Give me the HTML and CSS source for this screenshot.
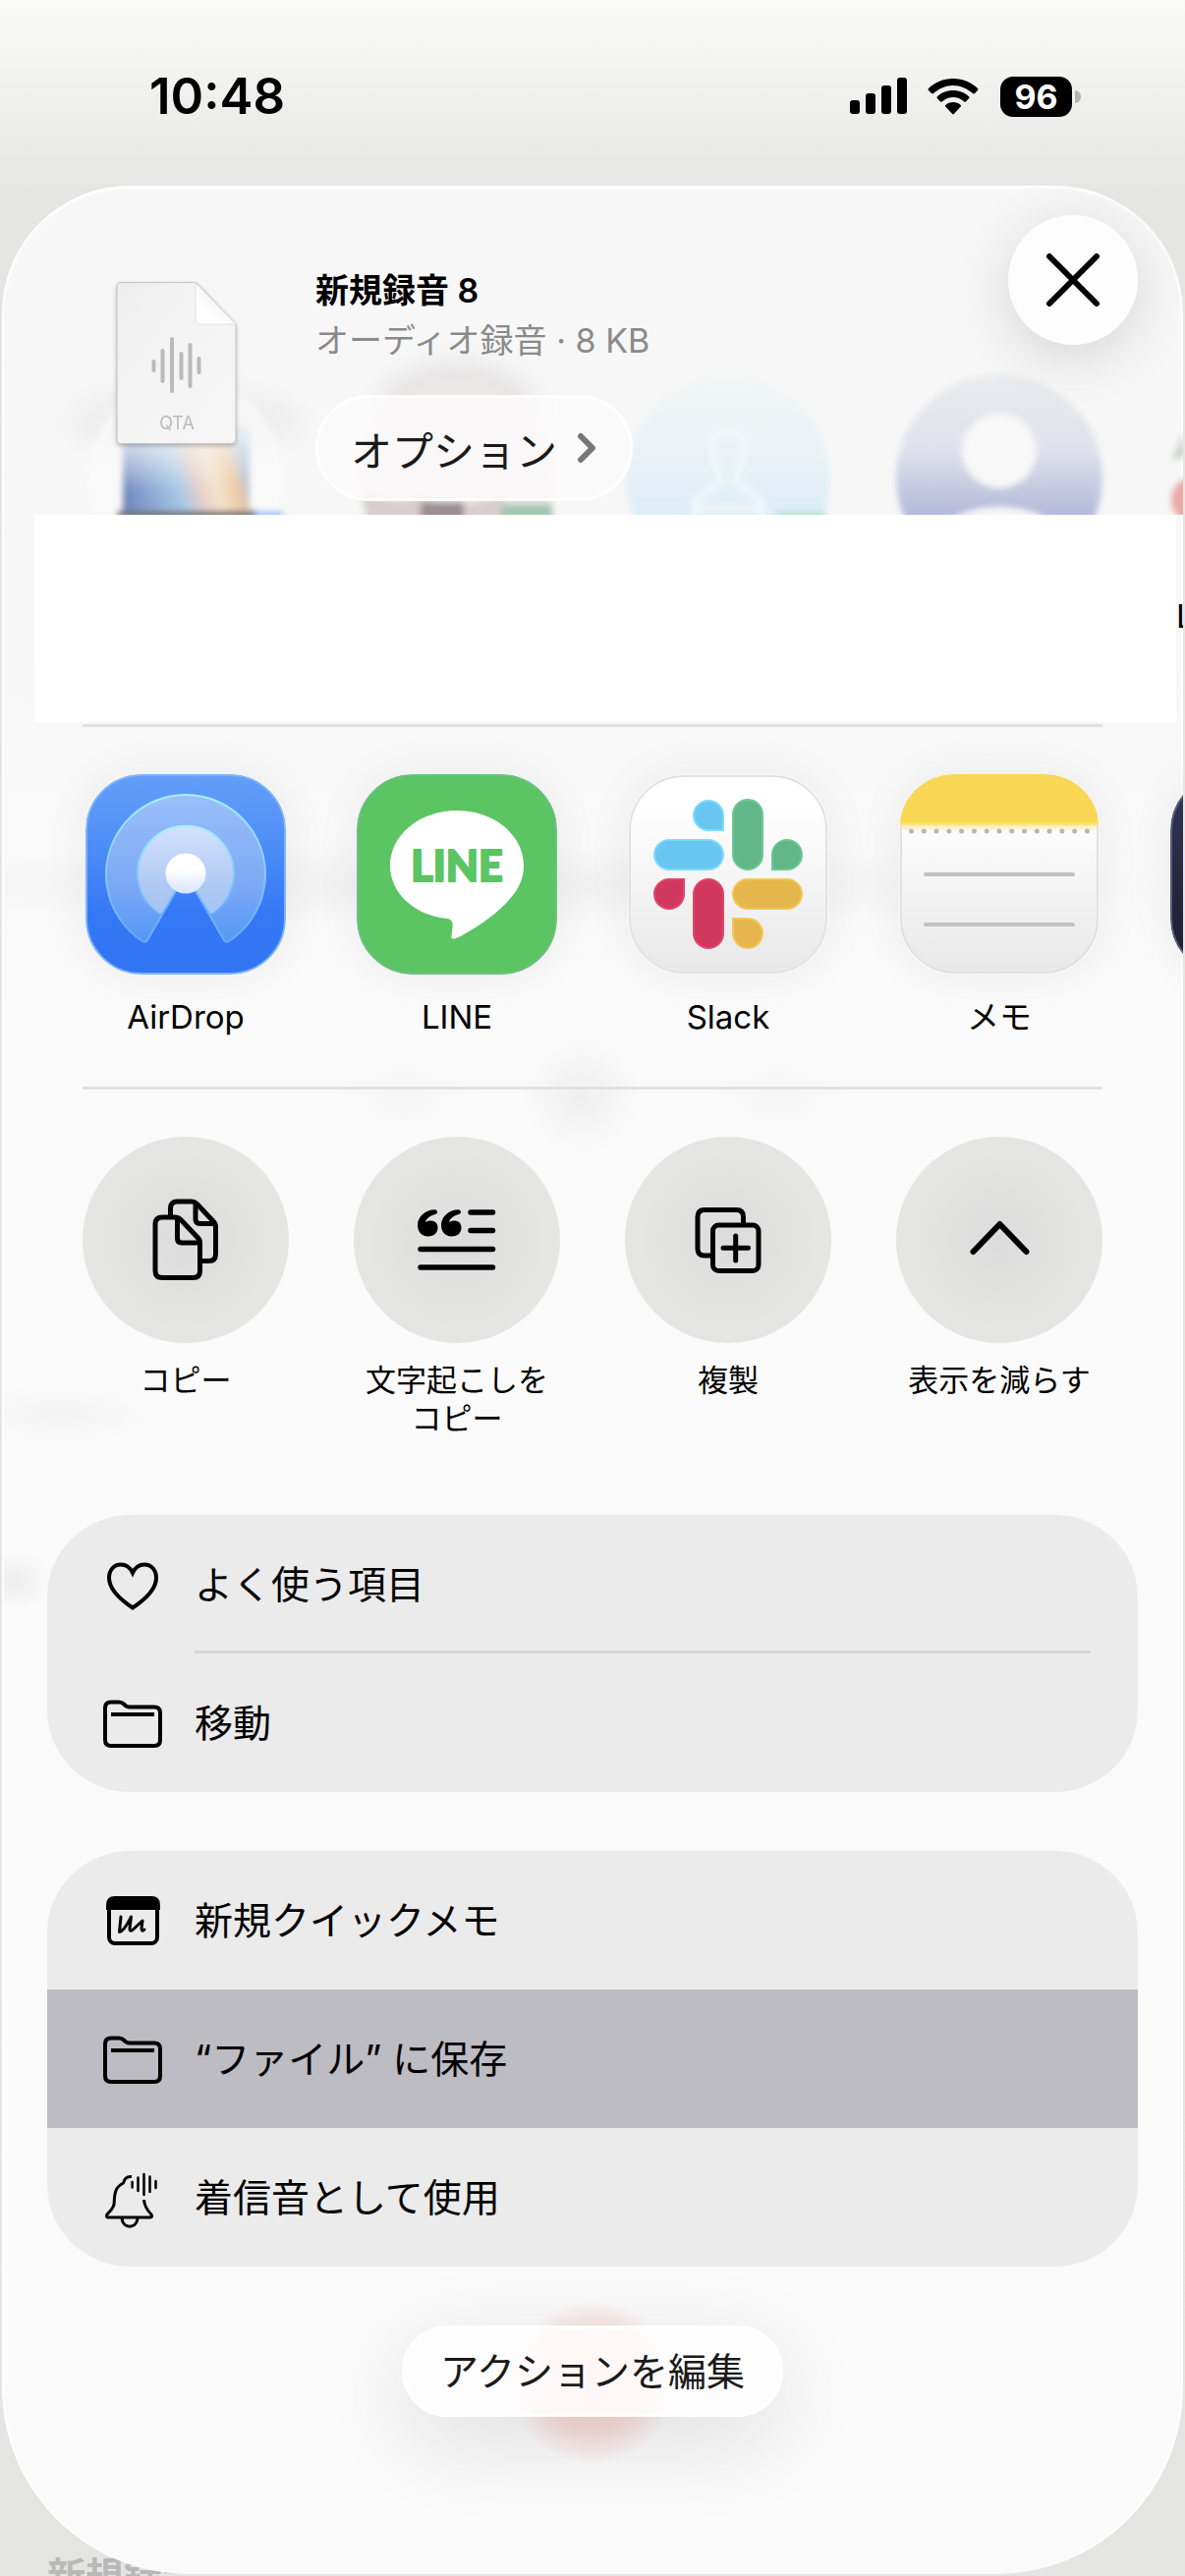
FILE: index.html
```html
<!DOCTYPE html>
<html lang="ja">
<head>
<meta charset="utf-8">
<meta name="viewport" content="width=device-width">
<title>共有</title>
<link rel="stylesheet" href="styles.css">
</head>
<body>
<div class="phone">
  <div class="status">
    <span class="clock">10:48</span>
    <svg class="signal" viewBox="0 0 58 38" aria-hidden="true">
      <rect x="0" y="23" width="10" height="14" rx="3"/><rect x="16" y="16" width="10" height="21" rx="3"/><rect x="32" y="8" width="10" height="29" rx="3"/><rect x="48" y="0" width="10" height="37" rx="3"/>
    </svg>
    <svg class="wifi" viewBox="0 0 52 38" aria-hidden="true">
      <path d="M26 1C36 1 45 5 51 11c.6.6.6 1.300 0 2l-3 3c-.6.6-1.300.6-2 0C40 11 33.500 8 26 8S12 11 6 16c-.7.6-1.400.6-2 0l-3-3c-.6-.7-.6-1.400 0-2C7 5 16 1 26 1z"/>
      <path d="M26 13c6.500 0 12 2.500 16 6.200.7.700.7 1.400 0 2l-3 3c-.7.7-1.300.7-2 0C34 21.500 30 20 26 20s-8 1.500-11 4.200c-.7.7-1.300.7-2 0l-3-3c-.7-.6-.7-1.300 0-2C14 15.500 19.500 13 26 13z"/>
      <path d="M26 25c3 0 5.500 1 7.500 2.700.7.700.7 1.300 0 2l-6.500 7c-.7.700-1.300.700-2 0l-6.500-7c-.7-.7-.7-1.300 0-2C20.500 26 23 25 26 25z"/>
    </svg>
    <span class="battery">96</span>
  </div>

  <main class="sheet">
    <header class="file-header">
      <svg class="people" width="1202" height="335" viewBox="0 0 1202 335" aria-hidden="true">
        <defs>
          <filter id="soft" x="-20%" y="-20%" width="140%" height="140%"><feGaussianBlur stdDeviation="3"/></filter>
          <filter id="softer" x="-40%" y="-40%" width="180%" height="180%"><feGaussianBlur stdDeviation="12"/></filter>
          <linearGradient id="sky" x1="0" y1="190" x2="0" y2="335" gradientUnits="userSpaceOnUse"><stop offset="0" stop-color="#f3f6f7"/><stop offset=".6" stop-color="#eaf2f6"/><stop offset="1" stop-color="#dcedf7"/></linearGradient>
          <linearGradient id="dusk" x1="0" y1="190" x2="0" y2="335" gradientUnits="userSpaceOnUse"><stop offset="0" stop-color="#ebecee"/><stop offset=".55" stop-color="#dfe1eb"/><stop offset="1" stop-color="#b4b9d9"/></linearGradient>
          <linearGradient id="photo" x1="120" y1="320" x2="250" y2="280" gradientUnits="userSpaceOnUse"><stop offset="0" stop-color="#6f82bd"/><stop offset=".45" stop-color="#a9cae6"/><stop offset=".6" stop-color="#ead0c8"/><stop offset=".72" stop-color="#f3e3cb"/><stop offset=".86" stop-color="#efc9a4"/><stop offset="1" stop-color="#9dbfe2"/></linearGradient>
          <linearGradient id="veil" x1="0" y1="240" x2="0" y2="310" gradientUnits="userSpaceOnUse"><stop offset="0" stop-color="#f7f7f7"/><stop offset="1" stop-color="#f7f7f7" stop-opacity="0"/></linearGradient>
        </defs>
        <ellipse cx="187" cy="240" rx="120" ry="34" fill="#e6e6e6" opacity=".55" filter="url(#softer)"/>
        <circle cx="187" cy="297" r="100" fill="#fafafa" opacity=".7" filter="url(#soft)"/>
        <g filter="url(#soft)">
          <rect x="123" y="232" width="129" height="105" fill="url(#photo)"/>
          <rect x="118" y="331" width="140" height="10" fill="#77777a"/>
          <rect x="258" y="332" width="28" height="8" fill="#9ebdfb"/>
          <rect x="118" y="222" width="140" height="90" fill="url(#veil)"/>
        </g>
        <ellipse cx="463" cy="230" rx="80" ry="50" fill="#d9d6d5" opacity=".6" filter="url(#softer)"/>
        <g filter="url(#soft)">
          <circle cx="463" cy="297" r="100" fill="#ece7e7"/>
          <path d="M366 312l36 10 28-6 22 14 60-14-4 30H372z" fill="#d6cfce"/>
          <rect x="426" y="322" width="44" height="20" fill="#9c8e92"/>
          <rect x="508" y="324" width="52" height="20" fill="#a5c5b3"/>
          <circle cx="739" cy="297" r="104" fill="url(#sky)"/>
          <path d="M704 341v-12q0-8 9-14 18-10 18-18 0-6-4-12-13-34 12-35 25 1 12 35-4 6-4 12 0 8 18 18 9 6 9 14v12M704 329h70" fill="none" stroke="#f3f7f9" stroke-width="7"/>
          <rect x="788" y="333" width="50" height="8" fill="#a4dcc2"/>
          <circle cx="1015" cy="297" r="105" fill="url(#dusk)"/>
          <circle cx="1015" cy="270" r="38" fill="#f8f8f8"/>
          <ellipse cx="1015" cy="358" rx="60" ry="31" fill="#f7f7f9"/>
          <path d="M1190 280l14-30v26z" fill="#c9d4ca"/><circle cx="1214" cy="320" r="24" fill="#eba9a6"/>
        </g>
      </svg>
      <svg class="doc" viewBox="0 0 123 165" role="img" aria-label="QTA">
        <defs>
          <linearGradient id="paper" x1="0" y1="0" x2="1" y2="1"><stop offset="0" stop-color="#ededed"/><stop offset=".4" stop-color="#f4f4f4"/><stop offset="1" stop-color="#f6f6f6"/></linearGradient>
          <linearGradient id="fold" x1="0" y1="1" x2="1" y2="0"><stop offset=".3" stop-color="#fff"/><stop offset="1" stop-color="#e9e9e9"/></linearGradient>
        </defs>
        <path d="M5 .5h74q3 0 5 2l36 38q2 2 2 5v114q0 5-5 5H5q-4 0-4-5V5q0-4.500 4-4.500z" fill="url(#paper)" stroke="#c4c4c4"/>
        <path d="M81 1l41 42H86q-5 0-5-5z" fill="url(#fold)" stroke="#e0e0e0"/>
        <path d="M38.500 81v9M47.500 70v31M57 58v53M66.500 73v25M75.500 64v42M84.500 78v14" stroke="#bababa" stroke-width="4" stroke-linecap="round"/>
        <text x="62" y="150" text-anchor="middle" class="doc-type">QTA</text>
      </svg>
      <div class="file-text">
        <h1 class="file-name">新規録音 8</h1>
        <p class="file-meta">オーディオ録音 · 8 KB</p>
        <button class="options" type="button">オプション
          <svg viewBox="0 0 20 32" aria-hidden="true"><path d="M4 4l12 12L4 28" fill="none" stroke="#777" stroke-width="6" stroke-linecap="round" stroke-linejoin="round"/></svg>
        </button>
      </div>
      <button class="close" type="button" aria-label="閉じる">
        <svg viewBox="0 0 56 56" aria-hidden="true"><path d="M4 4l48 48M52 4L4 52" stroke="#000" stroke-width="6" stroke-linecap="round"/></svg>
      </button>
    </header>

    <section class="contacts"><span class="contact-name">L</span></section>
    <hr class="rule">

    <nav class="strip" aria-label="アプリ">
      <a class="tile" href="#airdrop">
        <svg class="app" viewBox="0 0 204 204" aria-hidden="true">
          <defs>
            <linearGradient id="blue" x1="0" y1="0" x2="0" y2="1"><stop offset="0" stop-color="#629ef9"/><stop offset=".25" stop-color="#5593f7"/><stop offset=".7" stop-color="#3478f5"/><stop offset="1" stop-color="#3275f3"/></linearGradient>
            <linearGradient id="rim" x1="0" y1="0" x2="0" y2="1"><stop offset="0" stop-color="#a7f0ff"/><stop offset="1" stop-color="#66a9fa"/></linearGradient>
            <linearGradient id="ring" x1="0" y1="0" x2="0" y2="1"><stop offset="0" stop-color="#9abffa"/><stop offset=".6" stop-color="#7daaf5"/><stop offset="1" stop-color="#5597f5"/></linearGradient>
            <linearGradient id="core" x1="0" y1="0" x2="0" y2="1"><stop offset="0" stop-color="#d4e2fc"/><stop offset=".7" stop-color="#adc8f3"/><stop offset="1" stop-color="#a2c5f7"/></linearGradient>
            <linearGradient id="dot" x1="0" y1="0" x2="0" y2="1"><stop offset=".4" stop-color="#fff"/><stop offset="1" stop-color="#d6e4fb"/></linearGradient>
          </defs>
          <rect x="1" y="1" width="202" height="202" rx="56" fill="url(#blue)" stroke="#7db4f9" stroke-width="2"/>
          <path d="M102 101L63 169q-2 3-5 1A81 81 0 1 1 146 170q-3 2-5-1z" fill="url(#ring)" stroke="url(#rim)" stroke-width="2"/>
          <path d="M102 101L79 141q-2 3-5 1A49 49 0 1 1 130 142q-3 2-5-1z" fill="url(#core)" stroke="url(#rim)" stroke-width="2"/>
          <circle cx="102" cy="101" r="20.500" fill="url(#dot)"/>
        </svg>
        <span class="app-label">AirDrop</span>
      </a>
      <a class="tile" href="#line">
        <svg class="app" viewBox="0 0 204 204" aria-hidden="true">
          <rect x="1" y="1" width="202" height="202" rx="56" fill="#5bc463" stroke="#6fbf83" stroke-width="2"/>
          <path d="M102 37c38 0 68 25 68 56 0 13-5 24-15 35-13 15-38 32-54 39-4 1.500-5 0-4.500-3l1-8c.5-5 0-8-6-9C57 143 34 120 34 93c0-31 30-56 68-56z" fill="#fff"/>
          <text x="102" y="109" text-anchor="middle" class="line-mark">LINE</text>
        </svg>
        <span class="app-label">LINE</span>
      </a>
      <a class="tile" href="#slack">
        <svg class="app" viewBox="0 0 204 204" aria-hidden="true">
          <defs><linearGradient id="white" x1="0" y1="0" x2="0" y2="1"><stop offset=".15" stop-color="#fff"/><stop offset="1" stop-color="#e8e8e8"/></linearGradient></defs>
          <rect x="2" y="2" width="200" height="200" rx="55" fill="url(#white)" stroke="#e2e2e2" stroke-width="2"/>
          <g stroke-width="2">
            <g fill="#69c6f0" stroke="#7bdcff"><path d="M97 57H82a15 15 0 1 1 15-15z"/><rect x="27" y="67" width="70" height="30" rx="15"/></g>
            <g fill="#61b787" stroke="#69c993"><rect x="107" y="26" width="30" height="71" rx="15"/><path d="M147 97V82a15 15 0 1 1 15 15z"/></g>
            <g fill="#d1385d" stroke="#e1456c"><path d="M57 107v15a15 15 0 1 1-15-15z"/><rect x="67" y="107" width="30" height="70" rx="15"/></g>
            <g fill="#e5b64b" stroke="#f0c75a"><rect x="107" y="107" width="70" height="30" rx="15"/><path d="M107 147h15a15 15 0 1 1-15 15z"/></g>
          </g>
        </svg>
        <span class="app-label">Slack</span>
      </a>
      <a class="tile" href="#memo">
        <svg class="app" viewBox="0 0 204 204" aria-hidden="true">
          <defs><linearGradient id="glow" x1="0" y1="0" x2="0" y2="1"><stop offset="0" stop-color="#f9e7a0"/><stop offset="1" stop-color="#fbfaf3"/></linearGradient></defs>
          <rect x="2" y="2" width="200" height="200" rx="55" fill="url(#white)" stroke="#e0e0e0" stroke-width="2"/>
          <rect x="3" y="50" width="198" height="8" fill="url(#glow)"/>
          <path d="M1 51C3 18 22 0 56 0h92c34 0 53 18 55 51z" fill="#f8d755"/>
          <path d="M1 50h202" stroke="#fce05c" stroke-width="3"/>
          <path d="M12.500 58h180" stroke="#bdb8a5" stroke-width="5" stroke-linecap="round" stroke-dasharray="0 12.780"/>
          <path d="M27 102h150M27 153h150" stroke="#c1c1c1" stroke-width="4" stroke-linecap="round"/>
        </svg>
        <span class="app-label">メモ</span>
      </a>
      <a class="tile" href="#more" aria-label="その他">
        <svg class="app" viewBox="0 0 204 204" aria-hidden="true">
          <defs><linearGradient id="night" x1="0" y1="0" x2="0" y2="1"><stop offset="0" stop-color="#34365a"/><stop offset="1" stop-color="#1b1c2a"/></linearGradient></defs>
          <rect x="1" y="1" width="202" height="202" rx="56" fill="url(#night)" stroke="#5b5e80" stroke-width="2"/>
        </svg>
      </a>
    </nav>
    <hr class="rule">

    <div class="strip strip-actions">
      <button class="tile" type="button">
        <svg class="round" viewBox="0 0 210 210" aria-hidden="true">
          <g fill="none" stroke="#000" stroke-width="5" stroke-linejoin="round">
            <path d="M89.500 81v-8q0-7 7-7H111q3 0 5 2l17 18q2.500 2.500 2.500 6v27.500q0 7-7 7H122"/>
            <path d="M115 67v17q0 4.500 4.500 4.500H135"/>
            <path d="M81 82h13.500q3 0 5 2l17 18q3 2.500 3 6v28.500q0 7-7 7H81q-7 0-7-7V89q0-7 7-7z"/>
            <path d="M96.500 83v20.500q0 4.500 4.500 4.500h18"/>
          </g>
        </svg>
        <span class="action-label">コピー</span>
      </button>
      <button class="tile" type="button">
        <svg class="round" viewBox="0 0 210 210" aria-hidden="true">
          <path d="M119 77h22.500M119 95.500h22.500M68 114.500h73.500M68 133h73.500" stroke="#000" stroke-width="5.500" stroke-linecap="round"/>
          <path id="quote" d="M82.500 74.300c3 0 3.500 4 .5 4.700-5 1.200-9 4-10 8 9-4 13 1 12.500 6.500-.5 5-4.500 8-10 8-6.500 0-10.500-5-10.500-11.500 0-8.500 8-15.700 17.500-15.700z"/>
          <use href="#quote" x="24"/>
        </svg>
        <span class="action-label">文字起こしを<br>コピー</span>
      </button>
      <button class="tile" type="button">
        <svg class="round" viewBox="0 0 210 210" aria-hidden="true">
          <g fill="none" stroke="#000" stroke-width="5" stroke-linecap="round">
            <path stroke-linecap="butt" d="M87 121h-6q-7 0-7-7V81.500q0-7 7-7h32.500q7 0 7 7V88"/>
            <rect x="89.500" y="90" width="46.500" height="46.500" rx="6"/>
            <path d="M112.700 101v25M100 113.300h25.500"/>
          </g>
        </svg>
        <span class="action-label">複製</span>
      </button>
      <button class="tile" type="button">
        <svg class="round" viewBox="0 0 210 210" aria-hidden="true">
          <path d="M78.500 117l27-28L132.500 117" fill="none" stroke="#000" stroke-width="6" stroke-linecap="round" stroke-linejoin="round"/>
        </svg>
        <span class="action-label">表示を減らす</span>
      </button>
    </div>

    <div class="groups">
      <ul class="group">
        <li><button class="row" type="button">
          <svg viewBox="0 0 66 66" aria-hidden="true"><path d="M33 56.500C21 48.500 9 37.500 9 26c0-8 5-13.500 12-13.500 5 0 9.500 3 12 8.500 2.500-5.500 7-8.500 12-8.500 7 0 12 5.500 12 13.500 0 11.500-12 22.500-24 30.500z"/></svg>
          <span class="row-label">よく使う項目</span></button></li>
        <li class="divided"><button class="row" type="button">
          <svg viewBox="0 0 66 66" aria-hidden="true"><path d="M11 56q-6 0-6-6V17.500q0-6 6-6h8q3 0 5 2l1.500 1.500q2 1.500 4 1.500H55q6 0 6 6V50q0 6-6 6zM11 24h44"/></svg>
          <span class="row-label">移動</span></button></li>
      </ul>
      <ul class="group">
        <li><button class="row" type="button">
          <svg viewBox="0 0 66 66" aria-hidden="true"><rect x="9" y="11" width="49" height="45" rx="6"/><path d="M8 20v-3q0-7 7-7h37q7 0 7 7v3z" fill="#000"/><path stroke-width="3" stroke-linecap="round" stroke-linejoin="round" d="M21 29l-1.500 15.500c5-1 9-10 12-15.500l-1.500 11.500q0 5 4 1l9-8.500-1 8q0 4 3 1"/></svg>
          <span class="row-label">新規クイックメモ</span></button></li>
        <li><button class="row row-pressed" type="button">
          <svg viewBox="0 0 66 66" aria-hidden="true"><path d="M11 56q-6 0-6-6V17.500q0-6 6-6h8q3 0 5 2l1.500 1.500q2 1.500 4 1.500H55q6 0 6 6V50q0 6-6 6zM11 24h44"/></svg>
          <span class="row-label">“ファイル” に保存</span></button></li>
        <li><button class="row" type="button">
          <svg viewBox="0 0 66 66" aria-hidden="true"><g stroke-width="3"><path d="M32 11.500q-7-.5-8.500 6.500c-8 4-9 10-9.300 20-.2 6-4 8-7.200 12q-1.500 3 1 3h43q2.500 0 1-3c-4-4-7-8-7.500-15"/><path d="M22 54c1 11 15 11 16 0"/><path stroke-width="2.500" stroke-linecap="round" d="M32.600 17v5.500M38.500 12.500V26M44.500 9v21M50.500 11.500V27M56.500 16v7"/></g></svg>
          <span class="row-label">着信音として使用</span></button></li>
      </ul>
    </div>

    <div class="footer"><button class="edit" type="button">アクションを編集</button></div>
  </main>
  <div class="behind" aria-hidden="true">新規録音</div>
</div>
</body>
</html>
```
FILE: styles.css
```css
* { box-sizing: border-box; }

body {
  margin: 0;
  background: #e4e4e2;
  color: #000;
  font-family: Inter, "Noto Sans CJK JP", sans-serif;
}

button {
  margin: 0;
  padding: 0;
  border: 0;
  background: none;
  color: inherit;
  font: inherit;
}

h1, p, ul { margin: 0; padding: 0; }
ul { list-style: none; }
svg { display: block; flex: none; }

.phone {
  position: relative;
  min-height: 100vh;
  padding: 0 2px 2px;
  overflow: hidden;
  background: linear-gradient(#f9f9f8, #f4f4f3 60px, #ebebea 140px, #e5e5e3 200px, #e4e4e2);
}

/* status bar */
.status {
  display: flex;
  align-items: center;
  height: 189px;
  padding: 7px 113px 0 150px;
}
.clock {
  margin-right: auto;
  font-size: 51px;
  font-weight: 600;
  line-height: 60px;
}
.signal { width: 58px; height: 38px; margin-right: 21px; }
.wifi { width: 52px; height: 38px; margin-right: 22px; }
.battery {
  position: relative;
  width: 73px;
  border-radius: 13px;
  background: #000;
  color: #fff;
  font-size: 34px;
  font-weight: 700;
  line-height: 41px;
  text-align: center;
}
.battery::after {
  content: "";
  position: absolute;
  top: 14px;
  right: -9px;
  width: 6px;
  height: 13px;
  border-radius: 0 6px 6px 0;
  background: #b5b5b4;
}

/* sheet */
.sheet {
  position: relative;
  z-index: 1;
  overflow: hidden;
  padding-bottom: 160px;
  border-radius: 130px 130px 190px 190px;
  background:
    radial-gradient(60px 60px at 590px 926px, #efefef, transparent),
    radial-gradient(70px 50px at 410px 926px, #f6f6f6, transparent),
    radial-gradient(70px 50px at 790px 926px, #f6f6f6, transparent),
    radial-gradient(700px 40px at 500px 711px, #f0f0f0, transparent),
    radial-gradient(100px 30px at 60px 1250px, #f3f3f3, transparent),
    radial-gradient(40px 30px at 12px 1420px, #eeeeee, transparent),
    linear-gradient(#f7f7f7, #f7f7f7 400px, #fafafa 900px, #fafafa);
  box-shadow: inset 0 3px 3px #fff, inset 2px 0 2px #fff, inset -2px 0 2px #fff;
}

.file-header {
  position: relative;
  display: flex;
  gap: 80px;
  padding: 81px 200px 14px 116px;
}
.people { position: absolute; top: 0; left: 0; }
.doc {
  position: relative;
  width: 123px;
  height: 165px;
  margin-top: 17px;
  filter: drop-shadow(0 2px 2px rgba(0, 0, 0, .25));
}
.doc-type { fill: #bababa; font-size: 18px; }
.file-text { position: relative; }
.file-name { font-size: 34px; font-weight: 600; line-height: 51px; }
.file-meta { color: #8a8a8a; font-size: 34px; line-height: 51px; }
.options {
  display: flex;
  align-items: center;
  gap: 20px;
  height: 108px;
  margin-top: 30px;
  padding: 0 34px 0 33px;
  border: 3px solid #fff;
  border-radius: 54px;
  background: rgba(252, 251, 251, .8);
  color: #1a1a1a;
  font-size: 42px;
}
.options svg { width: 20px; height: 32px; }
.close {
  position: absolute;
  top: 30px;
  right: 46px;
  display: grid;
  place-items: center;
  width: 132px;
  height: 132px;
  border-radius: 50%;
  background: #fdfdfd;
  box-shadow: 0 12px 60px rgba(0, 0, 0, .14);
}
.close svg { width: 56px; height: 56px; }

.contacts {
  position: relative;
  height: 211px;
  margin: 0 7px 2px 33px;
  background: #fff;
}
.contact-name {
  position: absolute;
  top: 84px;
  left: 100%;
  font-size: 33px;
  line-height: 39px;
}
.rule {
  height: 3px;
  margin: 0 82px;
  border: 0;
  background: #e0e0e0;
}

/* app and action strips */
.strip {
  display: flex;
  gap: 66px;
  padding: 48px 0 51px 82px;
  overflow: hidden;
}
.strip-actions { padding-bottom: 79px; }
.tile {
  display: flex;
  flex: none;
  flex-direction: column;
  align-items: center;
  width: 210px;
  color: #000;
  text-align: center;
  text-decoration: none;
}
.app {
  width: 204px;
  height: 204px;
  border-radius: 56px;
  box-shadow: 0 0 48px rgba(0, 0, 0, .06);
}
.app-label { margin-top: 24px; font-size: 33px; line-height: 39px; }
.round {
  width: 210px;
  height: 210px;
  border-radius: 50%;
  background: radial-gradient(circle, #dcdcdc, #e5e5e4 65%);
}
.action-label { margin-top: 18px; font-size: 31px; line-height: 39px; }
.line-mark {
  fill: #5bc463;
  stroke: #5bc463;
  stroke-width: 2px;
  stroke-linejoin: round;
  font-family: Lato, sans-serif;
  font-size: 43px;
  font-weight: 900;
}

/* action lists */
.groups { display: grid; gap: 60px; padding: 0 46px; }
.group { overflow: hidden; border-radius: 84px; background: #ebebeb; }
.divided { position: relative; }
.divided::before {
  content: "";
  position: absolute;
  top: -3px;
  left: 150px;
  right: 48px;
  height: 3px;
  background: #d6d6d6;
}
.row {
  display: flex;
  align-items: center;
  gap: 30px;
  width: 100%;
  height: 141px;
  padding-left: 54px;
  font-size: 39px;
  text-align: left;
}
.row svg { width: 66px; height: 66px; fill: none; stroke: #000; stroke-width: 4px; }
.row-label { padding-bottom: 6px; }
.row-pressed { background: #bdbcc3; }

.footer {
  display: flex;
  justify-content: center;
  margin-bottom: -100px;
  padding: 60px 0 100px;
  background: radial-gradient(circle 84px at 50% 118px, #f4d6d5, #f6dcdb 60%, transparent);
}
.edit {
  height: 93px;
  padding: 0 36px 6px;
  border: 3px solid #fff;
  border-radius: 47px;
  background: rgba(255, 254, 254, .8);
  box-shadow: 0 24px 90px rgba(0, 0, 0, .11);
  color: #1a1a1a;
  font-size: 39px;
}

.behind {
  position: absolute;
  bottom: 0;
  left: 48px;
  height: 20px;
  overflow: hidden;
  color: #b8b8b7;
  font-size: 39px;
  font-weight: 700;
  line-height: 39px;
}
```
